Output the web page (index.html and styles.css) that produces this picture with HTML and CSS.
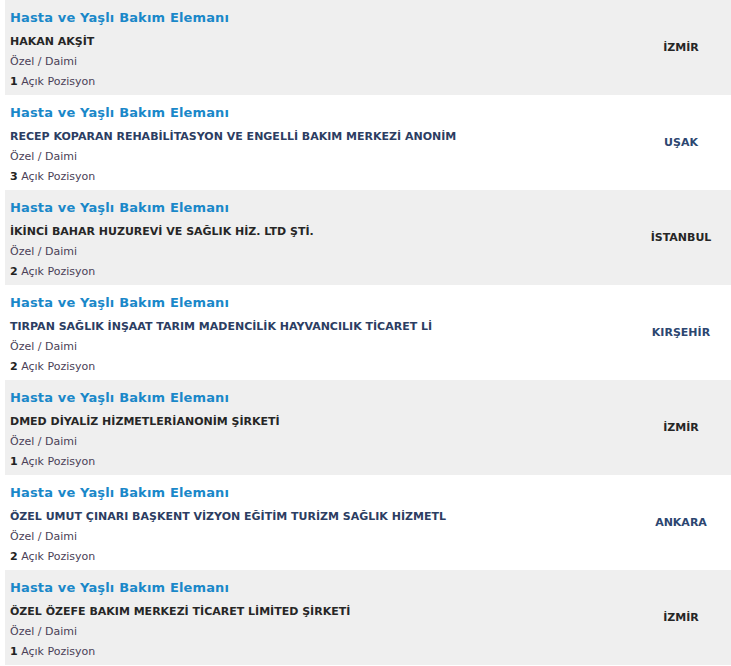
FILE: index.html
```html
<!DOCTYPE html>
<html lang="tr">
<head>
<meta charset="utf-8">
<title>İlanlar</title>
<link rel="stylesheet" href="styles.css">
</head>
<body>
<div class="list">
  <div class="row alt">
    <div class="info">
      <div class="title">Hasta ve Yaşlı Bakım Elemanı</div>
      <div class="company">HAKAN AKŞİT</div>
      <div class="meta">Özel / Daimi</div>
      <div class="meta"><b>1</b> Açık Pozisyon</div>
    </div>
    <div class="city">İZMİR</div>
  </div>
  <div class="row">
    <div class="info">
      <div class="title">Hasta ve Yaşlı Bakım Elemanı</div>
      <div class="company">RECEP KOPARAN REHABİLİTASYON VE ENGELLİ BAKIM MERKEZİ ANONİM</div>
      <div class="meta">Özel / Daimi</div>
      <div class="meta"><b>3</b> Açık Pozisyon</div>
    </div>
    <div class="city">UŞAK</div>
  </div>
  <div class="row alt">
    <div class="info">
      <div class="title">Hasta ve Yaşlı Bakım Elemanı</div>
      <div class="company">İKİNCİ BAHAR HUZUREVİ VE SAĞLIK HİZ. LTD ŞTİ.</div>
      <div class="meta">Özel / Daimi</div>
      <div class="meta"><b>2</b> Açık Pozisyon</div>
    </div>
    <div class="city">İSTANBUL</div>
  </div>
  <div class="row">
    <div class="info">
      <div class="title">Hasta ve Yaşlı Bakım Elemanı</div>
      <div class="company">TIRPAN SAĞLIK İNŞAAT TARIM MADENCİLİK HAYVANCILIK TİCARET Lİ</div>
      <div class="meta">Özel / Daimi</div>
      <div class="meta"><b>2</b> Açık Pozisyon</div>
    </div>
    <div class="city">KIRŞEHİR</div>
  </div>
  <div class="row alt">
    <div class="info">
      <div class="title">Hasta ve Yaşlı Bakım Elemanı</div>
      <div class="company">DMED DİYALİZ HİZMETLERİANONİM ŞİRKETİ</div>
      <div class="meta">Özel / Daimi</div>
      <div class="meta"><b>1</b> Açık Pozisyon</div>
    </div>
    <div class="city">İZMİR</div>
  </div>
  <div class="row">
    <div class="info">
      <div class="title">Hasta ve Yaşlı Bakım Elemanı</div>
      <div class="company">ÖZEL UMUT ÇINARI BAŞKENT VİZYON EĞİTİM TURİZM SAĞLIK HİZMETL</div>
      <div class="meta">Özel / Daimi</div>
      <div class="meta"><b>2</b> Açık Pozisyon</div>
    </div>
    <div class="city">ANKARA</div>
  </div>
  <div class="row alt">
    <div class="info">
      <div class="title">Hasta ve Yaşlı Bakım Elemanı</div>
      <div class="company">ÖZEL ÖZEFE BAKIM MERKEZİ TİCARET LİMİTED ŞİRKETİ</div>
      <div class="meta">Özel / Daimi</div>
      <div class="meta"><b>1</b> Açık Pozisyon</div>
    </div>
    <div class="city">İZMİR</div>
  </div>
</div>
</body>
</html>
```
FILE: styles.css
```css
html, body {
  margin: 0;
  padding: 0;
  background: #ffffff;
}
body {
  font-family: "DejaVu Sans", Verdana, sans-serif;
}
.list {
  padding-left: 5px;
  display: flex;
  flex-direction: column;
}
.row {
  height: 95px;
  box-sizing: border-box;
  display: grid;
  grid-template-columns: 1fr 100px;
  align-items: center;
  background: #ffffff;
}
.row.alt {
  background: #efefef;
}
.info {
  padding: 5px 0 0 5px;
  align-self: start;
}
.title {
  font-size: 13px;
  font-weight: bold;
  color: #1a88c9;
  line-height: 26px;
  letter-spacing: 0.15px;
}
.company {
  font-size: 11px;
  font-weight: bold;
  color: #2c3d62;
  line-height: 21px;
  white-space: nowrap;
}
.row.alt .company {
  color: #262626;
}
.meta {
  font-size: 11px;
  color: #4a3f57;
  line-height: 20px;
}
.meta b {
  color: #222;
}
.city {
  font-size: 11px;
  font-weight: bold;
  text-align: center;
  color: #2c4670;
  padding-bottom: 1px;
}
.row.alt .city {
  color: #262626;
}
```
